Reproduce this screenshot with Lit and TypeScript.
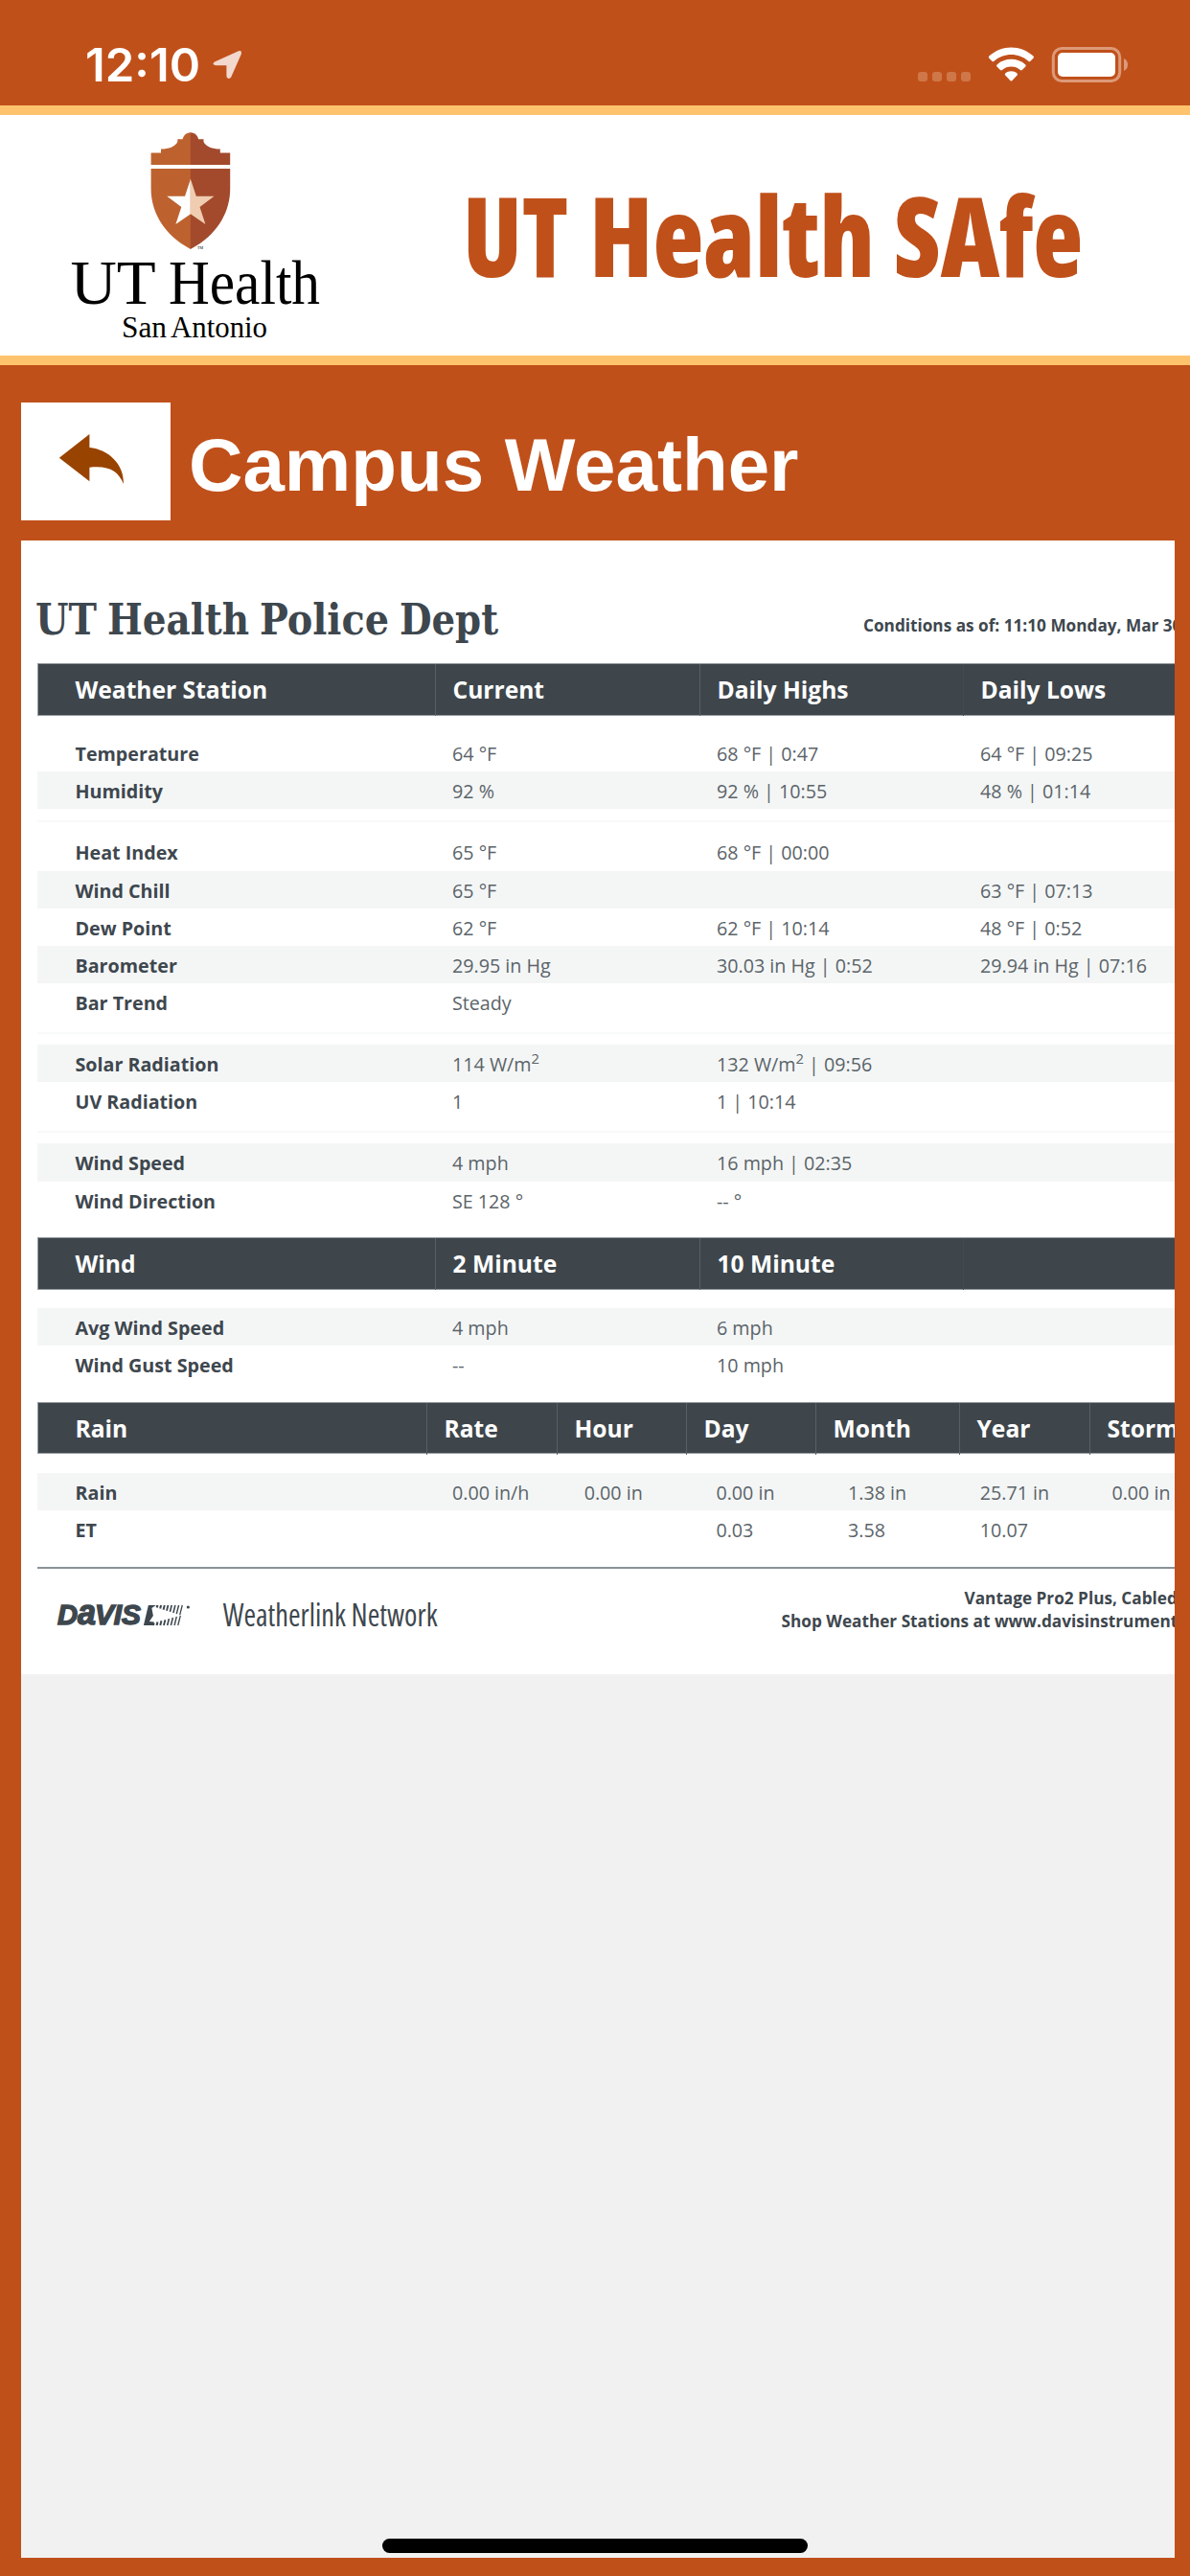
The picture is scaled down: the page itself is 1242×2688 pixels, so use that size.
import { LitElement, css, html, svg } from "lit";
import { customElement, property } from "lit/decorators.js";
import { classMap } from "lit/directives/class-map.js";

type Row = string[] | "divider";

const station: Row[] = [
  ["Temperature", "64 °F", "68 °F | 0:47", "64 °F | 09:25"],
  ["Humidity", "92 %", "92 % | 10:55", "48 % | 01:14"],
  "divider",
  ["Heat Index", "65 °F", "68 °F | 00:00", ""],
  ["Wind Chill", "65 °F", "", "63 °F | 07:13"],
  ["Dew Point", "62 °F", "62 °F | 10:14", "48 °F | 0:52"],
  ["Barometer", "29.95 in Hg", "30.03 in Hg | 0:52", "29.94 in Hg | 07:16"],
  ["Bar Trend", "Steady", "", ""],
  "divider",
  ["Solar Radiation", "114 W/m^2", "132 W/m^2 | 09:56", ""],
  ["UV Radiation", "1", "1 | 10:14", ""],
  "divider",
  ["Wind Speed", "4 mph", "16 mph | 02:35", ""],
  ["Wind Direction", "SE 128 °", "-- °", ""],
];

const wind: Row[] = [
  ["Avg Wind Speed", "4 mph", "6 mph", ""],
  ["Wind Gust Speed", "--", "10 mph", ""],
];

const rain: Row[] = [
  ["Rain", "0.00 in/h", "0.00 in", "0.00 in", "1.38 in", "25.71 in", "0.00 in"],
  ["ET", "", "", "0.03", "3.58", "10.07", ""],
];

const shaded = ["Humidity", "Wind Chill", "Barometer", "Solar Radiation", "Wind Speed", "Avg Wind Speed", "Rain"];

@customElement("status-bar")
export class StatusBar extends LitElement {
  static override styles = css`
    :host {
      display: flex;
      justify-content: space-between;
      height: 110px;
      padding: 0 65px 0 85px;
      box-sizing: border-box;
    }
    svg {
      display: block;
    }
    text {
      font: 600 47.5px Inter, sans-serif;
    }
  `;

  render() {
    return html`
      <svg width="180" height="110" viewBox="85 0 180 110">
        <text x="89" y="85" fill="#fff" textLength="120" lengthAdjust="spacingAndGlyphs">12:10</text>
        <path
          d="M224 64.5 L249 53.3 Q252.6 52.3 251.8 56.5 L241.2 80.5 Q239.6 83 237.2 81.3 Q236.4 80.5 236.4 79 V68.2 H225 Q220.5 67 224 64.5Z"
          fill="#f2d8cd"
        />
      </svg>
      <svg width="225" height="110" viewBox="952 0 225 110">
        <g fill="#cf7749">
          <rect x="958" y="75" width="10" height="10" rx="3" />
          <rect x="973" y="75" width="10" height="10" rx="3" />
          <rect x="988" y="75" width="10" height="10" rx="3" />
          <rect x="1003" y="75" width="10" height="10" rx="3" />
        </g>
        <g fill="#fff">
          <path d="M1032.3 58.6 Q1031.3 59.8 1032.3 60.8 L1035.6 64 Q1036.5 64.8 1037.5 63.8 C1047.5 54.7 1063.3 54.7 1073.3 63.8 Q1074.3 64.8 1075.2 64 L1078.5 60.8 Q1079.5 59.8 1078.5 58.6 C1065.5 46.3 1045.3 46.3 1032.3 58.6Z" />
          <path d="M1040.5 67.4 Q1039.5 68.6 1040.5 69.6 L1044 73 Q1045 73.8 1046 73 C1051.2 68.4 1059.6 68.4 1064.8 73 Q1065.8 73.8 1066.8 73 L1070.3 69.6 Q1071.3 68.6 1070.3 67.4 C1062 60 1048.8 60 1040.5 67.4Z" />
          <path d="M1049.2 76.4 Q1048.3 77.6 1049.2 78.6 L1054.6 84.2 Q1055.4 85 1056.2 84.2 L1061.6 78.6 Q1062.5 77.6 1061.6 76.4 C1058 73.4 1052.8 73.4 1049.2 76.4Z" />
        </g>
        <rect x="1099.3" y="50.5" width="69.4" height="34" rx="9" fill="none" stroke="#dd9a79" stroke-width="3" />
        <rect x="1104" y="55" width="60" height="25" rx="5" fill="#fff" />
        <path d="M1173 61 Q1177 63 1177 67.5 Q1177 72 1173 74Z" fill="#dd9a79" />
      </svg>
    `;
  }
}

@customElement("brand-banner")
export class BrandBanner extends LitElement {
  static override styles = css`
    :host {
      display: block;
      height: 251px;
      background: #fff;
      border-top: 10px solid #ffc36e;
      border-bottom: 10px solid #ffc36e;
    }
    svg {
      display: block;
    }
    .serif {
      font-family: "Liberation Serif", serif;
    }
    .app {
      font: 800 115px "Open Sans", sans-serif;
      font-stretch: 75%;
    }
  `;

  // One half of the shield, drawn on the left of x=198.8
  half(color: string, star: string) {
    return svg`
      <path fill=${color} d="M199 138.3 C194 138.3 191.5 142 190.6 145.3 H185.3 V148 C183 153 176 155.6 168 155.6 V159.6 H157.6 V172 H199Z" />
      <path fill=${color} d="M157.6 176 H199 V260 C172 246 157.6 222 157.6 197Z" />
      <path fill=${star} d="M199 186.5 L193 204.7 H174.3 L189.3 216 L183.4 234 L199 223.3Z" />
    `;
  }

  render() {
    return html`
      <svg width="1242" height="251" viewBox="0 120 1242 251">
        ${this.half("#bd622f", "#fff")}
        <g transform="translate(397.8 0) scale(-1 1)">${this.half("#a34a2d", "#f0cdb0")}</g>
        <g class="serif">
          <text x="206" y="259.5" font-size="4">TM</text>
          <text y="317" font-size="65">
            <tspan x="73.5" textLength="88" lengthAdjust="spacingAndGlyphs">UT</tspan>
            <tspan x="176" textLength="158" lengthAdjust="spacingAndGlyphs">Health</tspan>
          </text>
          <text y="352" font-size="32.5">
            <tspan x="127" textLength="47" lengthAdjust="spacingAndGlyphs">San</tspan>
            <tspan x="178" textLength="101" lengthAdjust="spacingAndGlyphs">Antonio</tspan>
          </text>
        </g>
        <text class="app" y="289" fill="#c0501a">
          <tspan x="483" textLength="110" lengthAdjust="spacingAndGlyphs">UT</tspan>
          <tspan x="615" textLength="298" lengthAdjust="spacingAndGlyphs">Health</tspan>
          <tspan x="933" textLength="197" lengthAdjust="spacingAndGlyphs">SAfe</tspan>
        </text>
      </svg>
    `;
  }
}

@customElement("weather-table")
export class WeatherTable extends LitElement {
  static override styles = css`
    :host {
      display: block;
      width: 1240px;
      padding-bottom: 19.5px;
    }
    .head,
    .row {
      display: grid;
      grid-template-columns: 414px 276px 275px 1fr;
    }
    .head {
      height: 54.4px;
      box-sizing: border-box;
      margin-bottom: 19.4px;
      background: #3e464c;
      border: 1px solid #949b9f;
      color: #fff;
      font-size: 24.6px;
      font-weight: 700;
      line-height: 54px;
    }
    .head span {
      padding-left: 17.5px;
      border-left: 1px solid #566067;
    }
    .head span:nth-child(4) {
      border-left-color: #434b51;
    }
    .head span:first-child {
      padding-left: 38.5px;
      border-left: 0;
    }
    .head.seven {
      grid-template-columns: 405px 136px 135px 135px 150px 136px 1fr;
    }
    .head.seven span:nth-child(4) {
      border-left-color: #566067;
    }
    .row {
      height: 39.17px;
      color: #5b6469;
      font-size: 19.7px;
      line-height: 41px;
    }
    .row.seven {
      grid-template-columns: 414px 137.7px 137.7px 137.7px 137.7px 137.7px 1fr;
    }
    .row.shaded {
      background: #f4f6f6;
    }
    .row span {
      padding-left: 19px;
    }
    .row span:first-child {
      padding-left: 39.5px;
      color: #3e474e;
      font-weight: 700;
    }
    sup {
      font-size: 75%;
      line-height: 0;
    }
    .divider {
      height: 25px;
      display: flex;
      align-items: center;
    }
    .divider::before {
      content: "";
      flex: 1;
      height: 2px;
      background: #f8f9f9;
    }
  `;

  @property({ attribute: false })
  headings: string[] = [];

  @property({ attribute: false })
  rows: Row[] = [];

  cell(text: string) {
    const [before, after] = text.split("^2");
    return html`<span>${before}${after === undefined ? "" : html`<sup>2</sup>${after}`}</span>`;
  }

  render() {
    const seven = this.headings.length === 7;
    return html`
      <div class=${classMap({ head: true, seven })}>${this.headings.map((h) => html`<span>${h}</span>`)}</div>
      ${this.rows.map((row) =>
        row === "divider"
          ? html`<div class="divider"></div>`
          : html`<div class=${classMap({ row: true, seven, shaded: shaded.includes(row[0]) })}>
              ${row.map((c) => this.cell(c))}
            </div>`
      )}
    `;
  }
}

@customElement("app-root")
export class AppRoot extends LitElement {
  static override styles = css`
    :host {
      display: flex;
      flex-direction: column;
      position: relative;
      width: 1242px;
      height: 2688px;
      overflow: hidden;
      background: #c0501a;
      font-family: "Open Sans", sans-serif;
    }
    svg {
      display: block;
    }
    .title-bar {
      display: flex;
      align-items: center;
      gap: 19px;
      height: 123px;
      padding: 39px 22px 21px;
    }
    .back {
      display: flex;
      width: 156px;
      height: 123px;
      padding: 0;
      border: 0;
      background: #fff;
    }
    h1 {
      margin: 0;
      padding-top: 7px;
      color: #fff;
      font: bold 78.1px "Liberation Sans", sans-serif;
    }
    .page {
      flex: 1;
      margin: 0 16px 19px 22px;
      overflow: hidden;
      background: #f1f1f1;
    }
    .sheet {
      width: 1257px;
      height: 1183px;
      padding-left: 17px;
      box-sizing: border-box;
      background: #fff;
      color: #3e474e;
    }
    .sheet-head {
      display: flex;
      height: 128.3px;
    }
    .merri {
      font: bold 44.7px "DejaVu Serif", serif;
      font-stretch: 75%;
    }
    .conditions {
      margin-left: 361px;
      padding-top: 75px;
      font-size: 17.2px;
      font-weight: 700;
      line-height: 27px;
      white-space: nowrap;
    }
    .footer {
      display: flex;
      width: 1240px;
      border-top: 2px solid #8a9296;
      margin-top: 0.5px;
    }
    .davis {
      font: italic bold 29px "Liberation Sans", sans-serif;
    }
    .network {
      font: 500 33.6px "Open Sans", sans-serif;
      font-stretch: 75%;
    }
    .credits {
      display: flex;
      flex-direction: column;
      padding: 19.5px 0 0 337px;
      font-size: 17.2px;
      font-weight: 700;
      line-height: 24px;
      white-space: nowrap;
    }
    .credits .model {
      padding-left: 191px;
    }
    .home {
      position: absolute;
      left: 399px;
      bottom: 24px;
      width: 444px;
      height: 15px;
      border-radius: 8px;
      background: #000;
    }
  `;

  render() {
    // Slanted bars of the flag, shortened towards the pole
    const bars = [0, 1, 2, 3, 4, 5, 6, 7];
    return html`
      <status-bar></status-bar>
      <brand-banner></brand-banner>
      <div class="title-bar">
        <button class="back" aria-label="Back">
          <svg width="156" height="123" viewBox="22 420 156 123">
            <path
              fill="#994300"
              d="M61.8 477.7 L93.4 453 V467 C113 469 129.5 484 129 505 C123.5 492 114 485.5 93.4 487.8 V502.3Z"
            />
          </svg>
        </button>
        <h1>Campus Weather</h1>
      </div>
      <div class="page">
        <div class="sheet">
          <div class="sheet-head">
            <svg width="501" height="128" viewBox="39 564 501 128" overflow="visible">
              <text class="merri" y="662.2" fill="#3e474e">
                <tspan x="37" textLength="64" lengthAdjust="spacingAndGlyphs">UT</tspan>
                <tspan x="112" textLength="148" lengthAdjust="spacingAndGlyphs">Health</tspan>
                <tspan x="271" textLength="135" lengthAdjust="spacingAndGlyphs">Police</tspan>
                <tspan x="417" textLength="103" lengthAdjust="spacingAndGlyphs">Dept</tspan>
              </text>
            </svg>
            <div class="conditions">Conditions as of: 11:10 Monday, Mar 30, 2020</div>
          </div>
          <weather-table
            .headings=${["Weather Station", "Current", "Daily Highs", "Daily Lows"]}
            .rows=${station}
          ></weather-table>
          <weather-table .headings=${["Wind", "2 Minute", "10 Minute", ""]} .rows=${wind}></weather-table>
          <weather-table
            .headings=${["Rain", "Rate", "Hour", "Day", "Month", "Year", "Storm"]}
            .rows=${rain}
          ></weather-table>
          <div class="footer">
            <svg width="440" height="100" viewBox="39 1637 440 100" fill="#3e474e">
              <text class="davis" y="1695.5" stroke="#3e474e" stroke-width="1.5">
                <tspan x="60" textLength="21" lengthAdjust="spacingAndGlyphs">D</tspan><tspan
                  x="81" font-size="37" textLength="19" lengthAdjust="spacingAndGlyphs">a</tspan><tspan
                  x="99" textLength="48" lengthAdjust="spacingAndGlyphs">VIS</tspan>
              </text>
              <path d="M155 1675 H163 L158.5 1678 L160 1686 L156 1692 L161 1692.5 L160 1696 H150Z" />
              <g stroke="#3e474e">
                ${bars.map((i) => {
                  const x = 164.5 + i * 3.7;
                  const h = 2.5 + i * 1.1;
                  const s = h * 0.25;
                  const w = 2.2 - i * 0.13;
                  return svg`
                    <path stroke-width=${w} d="M${x} 1675 l${-s} ${h}" />
                    <path stroke-width=${w} d="M${x - 4.5} 1696 l${s} ${-h}" />
                  `;
                })}
              </g>
              <circle cx="196.5" cy="1677" r="1.6" />
              <text class="network" x="233" y="1696.7" textLength="224" lengthAdjust="spacingAndGlyphs">Weatherlink Network</text>
            </svg>
            <div class="credits">
              <span class="model">Vantage Pro2 Plus, Cabled</span>
              <span>Shop Weather Stations at www.davisinstruments.com</span>
            </div>
          </div>
        </div>
      </div>
      <div class="home"></div>
    `;
  }
}

declare global {
  interface HTMLElementTagNameMap {
    "app-root": AppRoot;
    "status-bar": StatusBar;
    "brand-banner": BrandBanner;
    "weather-table": WeatherTable;
  }
}
